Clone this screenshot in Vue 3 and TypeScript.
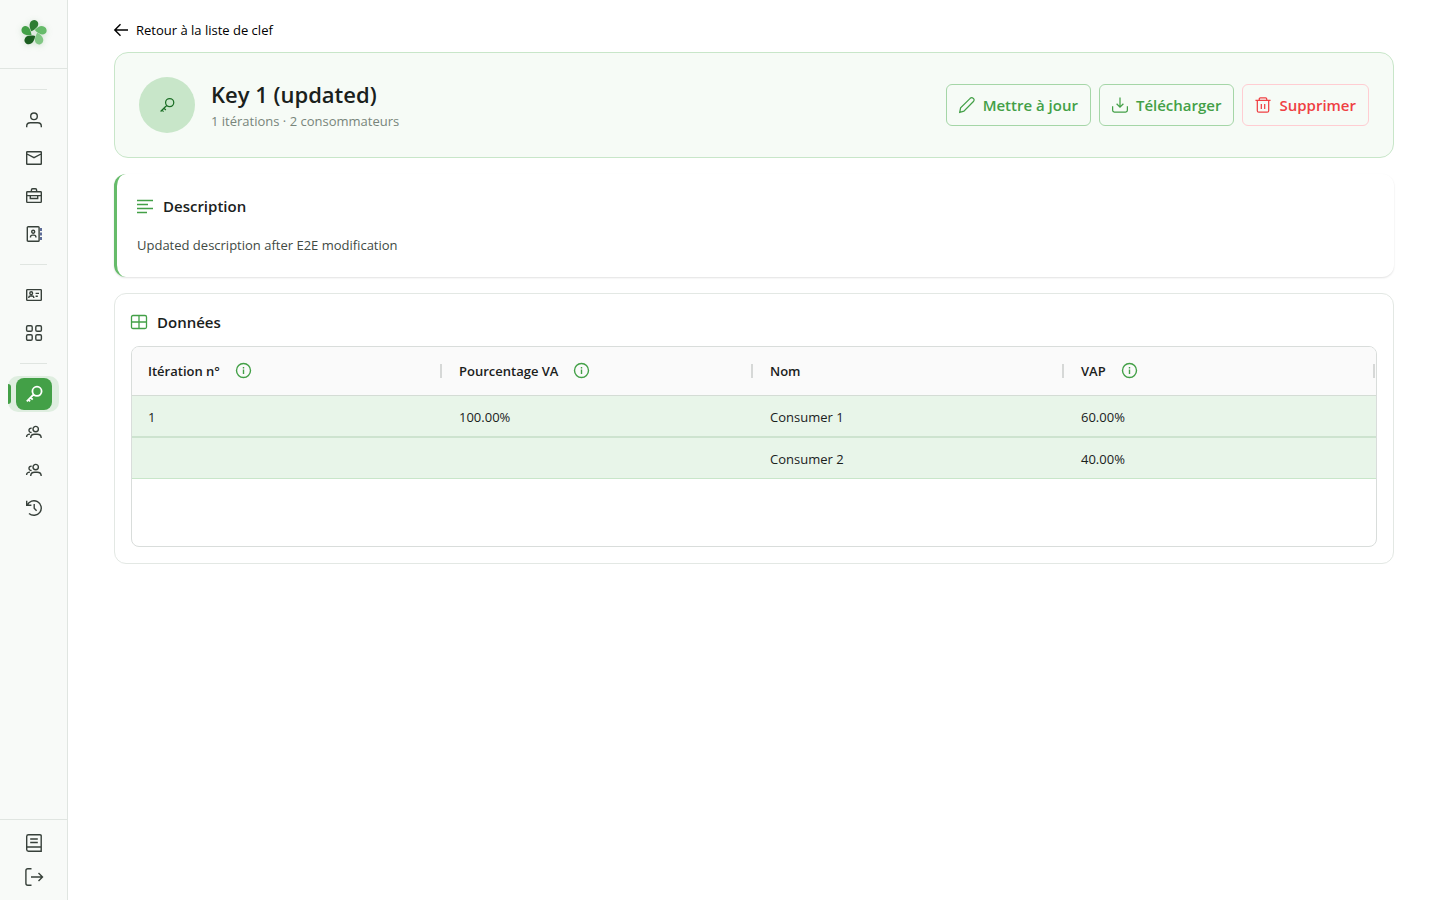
<script setup lang="ts">
interface NavItem {
  id: string
  label: string
  icon: string
  active?: boolean
}

interface Column {
  label: string
  info?: boolean
}

const icons: Record<string, string> = {
  user: 'M9 2a3.3 3.3 0 1 1 0 6.6A3.3 3.3 0 0 1 9 2zM1.7 16.3v-1c0-2.1 1.6-3.5 3.6-3.5h7.4c2 0 3.6 1.4 3.6 3.5v1',
  mail: 'M2.2 2.7h13.6q.5 0 .5.5v11.6q0 .5-.5.5H2.2q-.5 0-.5-.5V3.2q0-.5.5-.5zM2 5l7 3.6L16 5',
  briefcase: 'M2.4 4.7h13.2q.7 0 .7.7v9.2q0 .8-.7.8H2.4q-.7 0-.7-.8V5.4q0-.7.7-.7zM6.4 4.7V3q0-1.2 1.2-1.2h2.8q1.2 0 1.2 1.2v1.7M1.7 8.6h14.6M5.3 8.6v2.9h7.4V8.6',
  contacts: 'M3.2 1.7h10q.9 0 .9.9v12.8q0 .9-.9.9h-10q-.9 0-.9-.9V2.6q0-.9.9-.9zM8.2 5.3a1.5 1.5 0 1 1 0 3 1.5 1.5 0 0 1 0-3zM5.5 12.6v-.5q0-2 2-2h1.4q2 0 2 2v.5',
  card: 'M2.4 3.6h13.2q.7 0 .7.7v9.4q0 .7-.7.7H2.4q-.7 0-.7-.7V4.3q0-.7.7-.7zM6.2 5.8a1.4 1.4 0 1 1 0 2.8 1.4 1.4 0 0 1 0-2.8zM3.8 12v-.4q0-1.6 1.6-1.6h1.8q1.6 0 1.6 1.6v.4M10.6 7.4H14M10.6 10.2h2.2',
  grid: 'M2.9 1.7h3q1.3 0 1.3 1.3v3q0 1.3-1.3 1.3h-3Q1.6 7.3 1.6 6V3q0-1.3 1.3-1.3zM12.1 1.7h3q1.3 0 1.3 1.3v3q0 1.3-1.3 1.3h-3q-1.3 0-1.3-1.3V3q0-1.3 1.3-1.3zM2.900 10.700h3q1.300 0 1.300 1.300v3q0 1.300-1.300 1.300h-3q-1.300 0-1.300-1.300v-3q0-1.300 1.300-1.300zM12.100 10.700h3q1.300 0 1.300 1.300v3q0 1.300-1.300 1.300h-3q-1.300 0-1.300-1.300v-3q0-1.300 1.300-1.300z',
  key: 'M12 1.7a4.6 4.6 0 1 1 0 9.2 4.6 4.6 0 0 1 0-9.2zM8.6 9.5L1.8 16.3M5.6 12.5l2.1 2.1M3.4 14.7l1.7 1.7',
  users: 'M10.7 3.4a2.7 2.7 0 1 1 0 5.4 2.7 2.7 0 0 1 0-5.4zM5.7 15c0-2.4 1.9-3.7 4-3.7h2.5c2.1 0 4 1.3 4 3.7M6.6 5.2C4.8 5 3.9 6.2 4 7.5c.1 1.3 1.2 2.1 2.6 1.9M1.6 14c0-2 1.4-2.9 3.4-2.9',
  history: 'M1.7 1.8v4.5h4.7M2.2 6.2a7.3 7.3 0 1 1 1.8 8.2M9.2 5v4.2l2.4 2.6',
  book: 'M15 .8H3.5q-1.8 0-1.8 1.6v13.200q0 1.600 1.800 1.600h12.700V2q0-1.200-1.200-1.200zM5.200 5h7.600M5.200 8.500h7.600M2 13h14',
  logout: 'M6.5.8H2.8Q.9.8.9 2.8v12.400q0 2 1.900 2h3.700M6 9h11.500M13.500 5l4 4-4 4'
}

const groups: NavItem[][] = [
  [
    { id: 'profile', label: 'Profil', icon: 'user' },
    { id: 'mail', label: 'Messages', icon: 'mail' },
    { id: 'work', label: 'Gestion', icon: 'briefcase' },
    { id: 'contacts', label: 'Contacts', icon: 'contacts' }
  ],
  [
    { id: 'members', label: 'Membres', icon: 'card' },
    { id: 'meters', label: 'Compteurs', icon: 'grid' }
  ],
  [
    { id: 'keys', label: 'Clefs', icon: 'key', active: true },
    { id: 'communities', label: 'Communautés', icon: 'users' },
    { id: 'groups', label: 'Groupes', icon: 'users' },
    { id: 'history', label: 'Historique', icon: 'history' }
  ]
]

const footer: NavItem[] = [
  { id: 'docs', label: 'Documentation', icon: 'book' },
  { id: 'logout', label: 'Déconnexion', icon: 'logout' }
]

const petals = ['#2e7d32', '#66bb6a', '#81c784', '#1b5e20', '#43a047']

const columns: Column[] = [
  { label: 'Itération n°', info: true },
  { label: 'Pourcentage VA', info: true },
  { label: 'Nom' },
  { label: 'VAP', info: true }
]

const rows: string[][] = [
  ['1', '100.00%', 'Consumer 1', '60.00%'],
  ['', '', 'Consumer 2', '40.00%']
]
</script>

<template>
  <div class="app">
    <aside class="sidebar">
      <div class="brand">
        <svg class="logo" viewBox="-14 -14 28 28" aria-hidden="true">
          <path
            v-for="(fill, i) in petals"
            :key="fill"
            :fill="fill"
            :transform="`rotate(${i * 72})`"
            d="M-2.7-1.7C-4-4.2-5.1-7.6-3.9-10.2-2.4-13.8 2.7-14 4-10.5 5.2-7.2 2.2-4-2.7-1.7z"
          />
        </svg>
      </div>
      <nav class="nav" aria-label="Navigation principale">
        <div v-for="(group, g) in groups" :key="g" class="group">
          <a
            v-for="item in group"
            :key="item.id"
            :href="`#${item.id}`"
            :aria-label="item.label"
            :class="['item', { active: item.active }]"
          >
            <span class="tile">
              <svg class="icon" viewBox="0 0 18 18" aria-hidden="true">
                <path :d="icons[item.icon]" />
                <path v-if="item.icon === 'contacts'" class="tabs" d="M16 3v12" />
              </svg>
            </span>
          </a>
        </div>
      </nav>
      <div class="foot">
        <a v-for="item in footer" :key="item.id" :href="`#${item.id}`" :aria-label="item.label" class="foot-item">
          <svg class="icon" viewBox="0 0 18 18" aria-hidden="true"><path :d="icons[item.icon]" /></svg>
        </a>
      </div>
    </aside>

    <main class="main">
      <div class="content">
        <a href="#keys" class="back">
          <svg class="back-icon" viewBox="0 0 14 14" aria-hidden="true"><path d="M14 7H1M6.5 1.3L.8 7l5.7 5.7" /></svg>
          Retour à la liste de clef
        </a>

        <header class="hero">
          <div class="avatar">
            <svg class="icon" viewBox="0 0 18 18" aria-hidden="true"><path :d="icons.key" /></svg>
          </div>
          <div class="heading">
            <h1>Key 1 (updated)</h1>
            <p>1 itérations · 2 consommateurs</p>
          </div>
          <div class="actions">
            <button type="button" class="btn">
              <svg class="icon" viewBox="0 0 18 18" aria-hidden="true">
                <path d="M.8 17.200l1-5L12.600 1.500q1.200-1.100 2.600-.6 1.500.6 1.800 2 .1 1.200-.8 2.200L5.500 16z" />
              </svg>
              Mettre à jour
            </button>
            <button type="button" class="btn">
              <svg class="icon" viewBox="0 0 18 18" aria-hidden="true">
                <path d="M9 .5v10.800M5.200 7.600L9 11.400l3.800-3.800M.7 10.500v4.400q0 2 2 2h12.600q2 0 2-2v-4.400" />
              </svg>
              Télécharger
            </button>
            <button type="button" class="btn danger">
              <svg class="icon" viewBox="0 0 18 18" aria-hidden="true">
                <path d="M.5 3.900h17M4.800 3.900V2.200Q4.800.9 6.100.9h5.800q1.300 0 1.300 1.300v1.700M2.600 3.900v11.500q0 1.700 1.700 1.700h9.400q1.700 0 1.700-1.700V3.900M7.100 8v5.500M10.900 8v5.500" />
              </svg>
              Supprimer
            </button>
          </div>
        </header>

        <section class="description">
          <h2>
            <svg class="section-icon" viewBox="0 0 16 16" aria-hidden="true"><path d="M0 2.500h16M0 6.500h11M0 10.500h16M0 14.500h10" /></svg>
            Description
          </h2>
          <p>Updated description after E2E modification</p>
        </section>

        <section class="data">
          <h2>
            <svg class="section-icon" viewBox="0 0 16 16" aria-hidden="true"><path d="M2 1.500h12q1.500 0 1.500 1.500v10q0 1.500-1.500 1.500H2Q.5 14.500.5 13V3Q.5 1.500 2 1.500zM8 1.500v13M.5 8h15" /></svg>
            Données
          </h2>
          <div class="grid">
            <table>
              <thead>
                <tr>
                  <th v-for="col in columns" :key="col.label" scope="col">
                    <div class="th">
                      <span>{{ col.label }}</span>
                      <svg v-if="col.info" class="info" viewBox="0 0 16 16" aria-hidden="true">
                        <path d="M7.500.5a7 7 0 1 1 0 14 7 7 0 0 1 0-14zM7.500 6.500V11M7.500 4v1.400" />
                      </svg>
                    </div>
                  </th>
                </tr>
              </thead>
              <tbody>
                <tr v-for="(row, r) in rows" :key="r">
                  <td v-for="(cell, c) in row" :key="c">{{ cell }}</td>
                </tr>
              </tbody>
            </table>
          </div>
        </section>
      </div>
    </main>
  </div>
</template>

<style>
body {
  margin: 0;
  background: #ffffff;
}
</style>

<style scoped>
.app {
  display: flex;
  min-height: 100vh;
  font-family: "Segoe UI", "Open Sans", "Noto Sans", sans-serif;
  font-size: 13px;
  line-height: 20px;
  color: #1a211c;
}

.app *,
.app {
  box-sizing: border-box;
}

svg {
  display: block;
  flex: none;
  fill: none;
  stroke: currentColor;
  overflow: visible;
}

.sidebar {
  display: flex;
  flex-direction: column;
  flex: none;
  width: 68px;
  background: #f8faf8;
  border-right: 1px solid #e0e5e1;
  color: #37403a;
}

.brand {
  display: flex;
  align-items: center;
  justify-content: center;
  height: 69px;
  padding-bottom: 2px;
  border-bottom: 1px solid #e0e5e1;
}

.logo {
  width: 28px;
  height: 28px;
  stroke: none;
  filter: drop-shadow(0 1px 3px rgba(46, 125, 50, 0.2));
}

.nav {
  flex: 1;
  padding-top: 8px;
}

.group {
  display: flex;
  flex-direction: column;
  gap: 2px;
  padding: 0 8px;
}

.group::before {
  content: "";
  height: 1px;
  margin: 12px 12px 10px;
  background: #e0e5e1;
}

.item {
  display: flex;
  align-items: center;
  justify-content: center;
  height: 36px;
  border-radius: 10px;
  color: inherit;
  position: relative;
}

.tile {
  display: flex;
  align-items: center;
  justify-content: center;
  width: 36px;
  height: 32px;
  border-radius: 8px;
}

.item.active {
  background: #dfeee0;
  color: #ffffff;
}

.item.active .tile {
  background: #43a047;
}

.item.active::before {
  content: "";
  position: absolute;
  left: 0;
  top: 8px;
  width: 3px;
  height: 20px;
  border-radius: 0 3px 3px 0;
  background: #43a047;
}

.icon {
  width: 18px;
  height: 18px;
  stroke-width: 1.4;
}

.item.active .icon {
  stroke-width: 1.8;
}

.tabs {
  stroke: #1d2f6f;
  stroke-dasharray: 3 1.5;
}

.foot {
  display: flex;
  flex-direction: column;
  padding: 6px 8px;
  border-top: 1px solid #e0e5e1;
}

.foot-item {
  display: flex;
  align-items: center;
  justify-content: center;
  height: 34px;
  color: inherit;
}

.main {
  flex: 1;
  min-width: 0;
  padding: 20px 24px;
}

.content {
  display: flex;
  flex-direction: column;
  max-width: 1280px;
  margin: 0 auto;
}

.back {
  display: flex;
  align-items: center;
  gap: 8px;
  align-self: flex-start;
  margin-bottom: 12px;
  color: #000000;
  text-decoration: none;
}

.back-icon {
  width: 14px;
  height: 14px;
  stroke-width: 1.4;
}

.hero {
  display: flex;
  align-items: center;
  gap: 16px;
  padding: 24px;
  border: 1px solid #c8e6c9;
  border-radius: 14px;
  background: #f6fbf6;
}

.avatar {
  display: flex;
  align-items: center;
  justify-content: center;
  width: 56px;
  height: 56px;
  border-radius: 50%;
  background: #c8e6c9;
  color: #1b6e25;
}

.avatar .icon,
.btn .icon {
  width: 16px;
  height: 16px;
}

.heading {
  flex: 1;
}

h1,
h2,
p {
  margin: 0;
}

h1 {
  font-size: 22px;
  font-weight: 600;
  line-height: 32px;
}

.heading p {
  line-height: 22px;
  color: #78857b;
}

.actions {
  display: flex;
  gap: 8px;
}

.btn {
  display: flex;
  align-items: center;
  gap: 8px;
  height: 42px;
  padding: 0 12px;
  border: 1px solid #a5d6a7;
  border-radius: 6px;
  background: transparent;
  color: #43a047;
  font-family: inherit;
  font-size: 15px;
  font-weight: 600;
}

.btn.danger {
  border-color: #ffcdd2;
  color: #ef4043;
}

.description {
  margin-top: 16px;
  padding: 20px;
  border-left: 3px solid #66bb6a;
  border-radius: 12px;
  box-shadow: 0 1px 2px rgba(0, 0, 0, 0.12);
}

h2 {
  display: flex;
  align-items: center;
  gap: 10px;
  font-size: 15px;
  font-weight: 600;
  line-height: 24px;
}

.section-icon {
  width: 16px;
  height: 16px;
  color: #43a047;
  stroke-width: 1.3;
}

.description p {
  margin: 17px 0 2px;
  color: #414a44;
}

.data {
  margin-top: 16px;
  padding: 16px;
  border: 1px solid #e3e8e4;
  border-radius: 12px;
}

.grid {
  min-height: 201px;
  margin-top: 12px;
  border: 1px solid #d9dddb;
  border-radius: 8px;
  overflow: hidden;
}

table {
  width: 100%;
  table-layout: fixed;
  border-collapse: separate;
  border-spacing: 0;
}

th {
  height: 49px;
  padding: 0 1px 0 16px;
  border-bottom: 1px solid #d4dcd5;
  background: #fafafa;
  font-weight: 600;
  text-align: left;
}

.th {
  display: flex;
  align-items: center;
  gap: 16px;
}

.th::after {
  content: "";
  width: 2px;
  height: 14px;
  margin-left: auto;
  background: #d6d8d7;
}

.info {
  width: 16px;
  height: 16px;
  color: #43a047;
  stroke-width: 1.4;
}

td {
  height: 41px;
  padding: 2px 16px 0;
  border-bottom: 1px solid #c8e6c9;
  background: #e8f5e9;
}

tbody tr:first-child td {
  height: 42px;
  border-bottom: 2px solid #cde3cf;
}
</style>
